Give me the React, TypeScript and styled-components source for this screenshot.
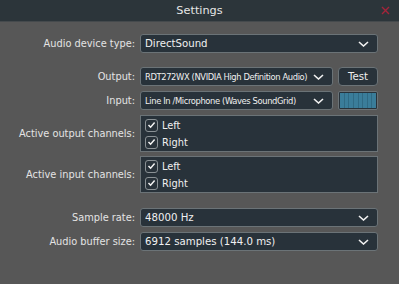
import styled, { createGlobalStyle } from "styled-components";

const GlobalStyle = createGlobalStyle`
    html, body {
        margin: 0;
        padding: 0;
        background: #575757;
    }
    body {
        font-family: "DejaVu Sans", Verdana, sans-serif;
    }
`

const Window = styled.div`
    width: 399px;
    height: 284px;
    background-color: #575757;
    display: flex;
    flex-direction: column;
    overflow: hidden;
`

const TitleBar = styled.div`
    position: relative;
    height: 22px;
    flex: none;
    background-color: #2c353a;
    border-bottom: 1px solid #454a4d;
    box-sizing: border-box;
    display: flex;
    align-items: center;
    justify-content: center;
    color: #e6e6e6;
    font-size: 11.3px;
`

const CloseButton = styled.div`
    position: absolute;
    right: 9px;
    top: 6px;
    width: 9px;
    height: 9px;
    display: flex;
`

const Body = styled.div`
    display: grid;
    grid-template-columns: 135px 238px;
    column-gap: 5px;
    padding: 12px 0 0 0;
`

const Label = styled.div<{ $top: number }>`
    margin-top: ${p => p.$top}px;
    display: flex;
    align-items: center;
    justify-content: flex-end;
    color: #e4e4e4;
    font-size: 9.8px;
    white-space: nowrap;
`

const Cell = styled.div<{ $top: number }>`
    margin-top: ${p => p.$top}px;
    display: flex;
    gap: 5px;
`

const Combo = styled.div<{ $condensed?: boolean }>`
    flex: 1;
    height: 19px;
    box-sizing: border-box;
    border: 1px solid #6b7377;
    border-radius: 3px;
    background-color: #28323a;
    color: #f0f0f0;
    display: flex;
    align-items: center;
    padding: 0 8px 0 4px;
    font-family: ${p => p.$condensed ? '"DejaVu Sans Condensed", "DejaVu Sans", sans-serif' : '"DejaVu Sans", sans-serif'};
    font-size: ${p => p.$condensed ? '9.3px' : '10.2px'};
    letter-spacing: ${p => p.$condensed ? '-0.38px' : '0'};
    white-space: nowrap;
    overflow: hidden;
`

const ComboText = styled.span`
    flex: 1;
    overflow: hidden;
`

const Button = styled.div`
    width: 40px;
    flex: none;
    height: 19px;
    box-sizing: border-box;
    border: 1px solid #6b7377;
    border-radius: 4px;
    background-color: #28323a;
    color: #f0f0f0;
    font-size: 10.2px;
    display: flex;
    align-items: center;
    justify-content: center;
`

const Meter = styled.div`
    width: 40px;
    flex: none;
    height: 19px;
    box-sizing: border-box;
    border: 1px solid #6b7377;
    border-radius: 2px;
    padding: 1px;
    background-color: #28323a;
    display: flex;
`

const MeterSeg = styled.div`
    flex: 1;
    background-color: #3a7d9a;
    border-right: 1px solid #2f6a84;
    &:last-child {
        border-right: none;
    }
`

const ChannelBox = styled.div`
    flex: 1;
    box-sizing: border-box;
    height: 37px;
    border: 1px solid #6b7377;
    background-color: #28323a;
    display: flex;
    flex-direction: column;
    justify-content: center;
    gap: 4px;
    padding: 0 4px;
`

const CheckRow = styled.div`
    display: flex;
    align-items: center;
    gap: 4px;
    color: #f0f0f0;
    font-size: 9.8px;
    height: 13px;
`

const CheckBox = styled.div`
    width: 11px;
    height: 11px;
    border: 1px solid #8a9195;
    border-radius: 3px;
    background-color: #28323a;
    display: flex;
    align-items: center;
    justify-content: center;
`

function Chevron() {
    return (
        <svg width="11" height="6" viewBox="0 0 11 6">
            <path d="M1 1 L5.5 5 L10 1" fill="none" stroke="#f0f0f0" strokeWidth="1.6" />
        </svg>
    )
}

function Check() {
    return (
        <svg width="9" height="8" viewBox="0 0 9 8">
            <path d="M1.5 4 L3.6 6.2 L7.6 1.6" fill="none" stroke="#f4f4f4" strokeWidth="1.5" />
        </svg>
    )
}

function Channel({ name }: { name: string }) {
    return (
        <CheckRow>
            <CheckBox><Check /></CheckBox>
            {name}
        </CheckRow>
    )
}

export default function App() {
    return (
        <Window>
            <GlobalStyle />
            <TitleBar>
                Settings
                <CloseButton>
                    <svg width="9" height="9" viewBox="0 0 9 9">
                        <path d="M1 1 L8 8 M8 1 L1 8" stroke="#a3243a" strokeWidth="1.4" />
                    </svg>
                </CloseButton>
            </TitleBar>
            <Body>
                <Label $top={0}>Audio device type:</Label>
                <Cell $top={0}>
                    <Combo><ComboText>DirectSound</ComboText><Chevron /></Combo>
                </Cell>

                <Label $top={14}>Output:</Label>
                <Cell $top={14}>
                    <Combo $condensed><ComboText>RDT272WX (NVIDIA High Definition Audio)</ComboText><Chevron /></Combo>
                    <Button>Test</Button>
                </Cell>

                <Label $top={5}>Input:</Label>
                <Cell $top={5}>
                    <Combo $condensed><ComboText>Line In /Microphone (Waves SoundGrid)</ComboText><Chevron /></Combo>
                    <Meter>
                        {Array.from({ length: 8 }).map((_, i) => <MeterSeg key={i} />)}
                    </Meter>
                </Cell>

                <Label $top={5}>Active output channels:</Label>
                <Cell $top={5}>
                    <ChannelBox>
                        <Channel name="Left" />
                        <Channel name="Right" />
                    </ChannelBox>
                </Cell>

                <Label $top={4}>Active input channels:</Label>
                <Cell $top={4}>
                    <ChannelBox>
                        <Channel name="Left" />
                        <Channel name="Right" />
                    </ChannelBox>
                </Cell>

                <Label $top={15}>Sample rate:</Label>
                <Cell $top={15}>
                    <Combo><ComboText>48000 Hz</ComboText><Chevron /></Combo>
                </Cell>

                <Label $top={5}>Audio buffer size:</Label>
                <Cell $top={5}>
                    <Combo><ComboText>6912 samples (144.0 ms)</ComboText><Chevron /></Combo>
                </Cell>
            </Body>
        </Window>
    )
}
